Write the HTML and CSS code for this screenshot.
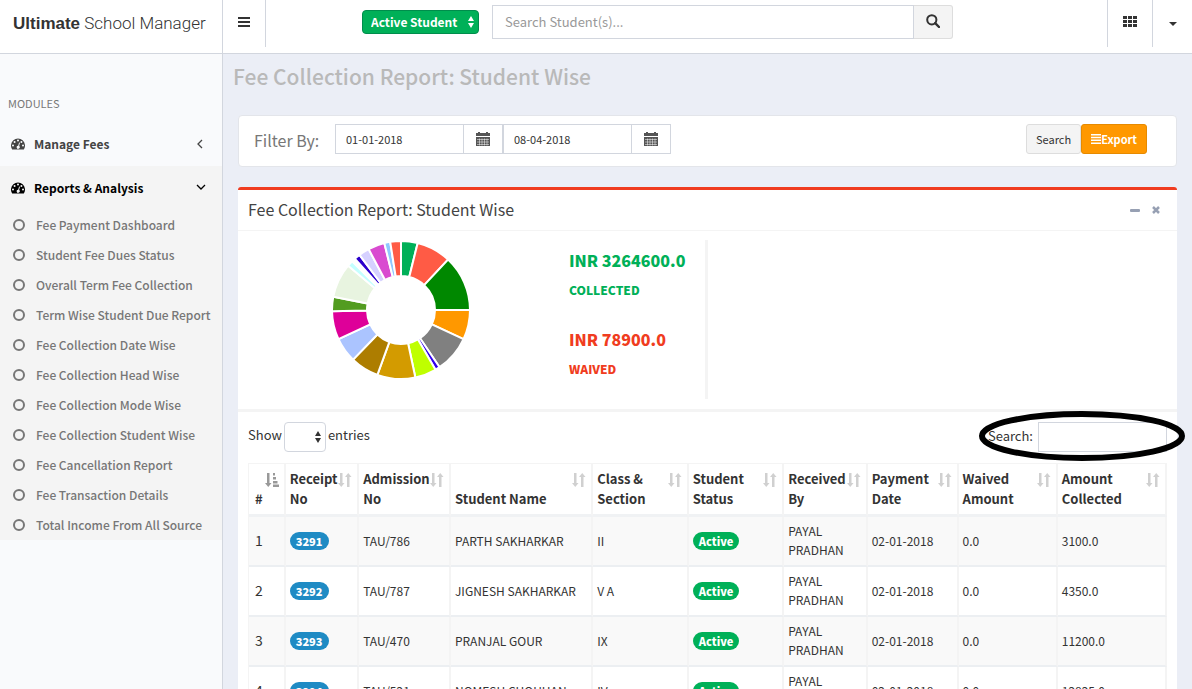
FILE: index.html
```html
<!DOCTYPE html>
<html lang="en">
<head>
  <meta charset="utf-8">
  <title>Ultimate School Manager</title>
  <link rel="stylesheet" href="styles.css">
</head>
<body>
  <svg class="sprite" aria-hidden="true">
    <symbol id="dash" viewBox="0 0 14 12">
      <path fill-rule="evenodd" d="M1.2 11.5A7 7 0 1 1 12.8 11.5ZM2 6.5a1 1 0 1 0 0 2a1 1 0 0 0 0-2ZM3.6 3a1 1 0 1 0 0 2a1 1 0 0 0 0-2ZM7 1.6a1 1 0 1 0 0 2a1 1 0 0 0 0-2ZM10.4 3a1 1 0 1 0 0 2a1 1 0 0 0 0-2ZM12 6.5a1 1 0 1 0 0 2a1 1 0 0 0 0-2ZM8.1 4.5L7.2 7.8a1.5 1.5 0 1 0 .9.3L9 4.8Z"/>
    </symbol>
    <symbol id="ring" viewBox="0 0 12 12">
      <circle cx="6" cy="6" r="5" fill="none" stroke="currentColor" stroke-width="2"/>
    </symbol>
    <symbol id="updown" viewBox="0 0 8 12">
      <path d="M4 0L7 5H1ZM4 12L1 7H7Z"/>
    </symbol>
    <symbol id="calendar" viewBox="0 0 14 14">
      <path d="M0 1h2V0h2v1h6V0h2v1h2v3H0ZM0 5h14v9H0Z"/>
      <path d="M1 7.500h12M1 10h12M1 12.500h12M3.500 6.500v7M6 6.500v7M8.500 6.500v7M11 6.500v7" stroke="#fff" stroke-width=".5"/>
    </symbol>
    <symbol id="sort" viewBox="0 0 14 14">
      <path d="M2 0h2.500v10H6.500L3.250 14L0 10H2ZM9 14h2.500V4H13.500L10.250 0L7 4H9Z"/>
    </symbol>
    <symbol id="sort-asc" viewBox="0 0 14 14">
      <path d="M2 0h2.500v10H6.500L3.250 14L0 10H2ZM8 0h2v2.500H8ZM8 4h3v2.500H8ZM8 8h4.500v2.500H8ZM8 11.500h6V14H8Z"/>
    </symbol>
  </svg>

  <div class="wrapper">
    <header class="main-header">
      <a class="logo" href="#"><b>Ultimate</b> School Manager</a>
      <button class="nav-item toggle" type="button" aria-label="Toggle navigation">
        <svg width="12" height="10" viewBox="0 0 12 10"><path d="M0 0h12v2H0ZM0 4h12v2H0ZM0 8h12v2H0Z"/></svg>
      </button>
      <form class="navbar-form">
        <span class="select-wrap status">
          <select aria-label="Student status"><option>Active Student</option></select>
          <svg width="8" height="12"><use href="#updown"/></svg>
        </span>
        <input class="navbar-search" type="text" placeholder="Search Student(s)..." aria-label="Search students">
        <button class="search-btn" type="button" aria-label="Search">
          <svg width="14" height="14" viewBox="0 0 14 14"><circle cx="5.800" cy="5.800" r="4.600" fill="none" stroke="currentColor" stroke-width="2"/><path d="M9.200 9.200L13 13" stroke="currentColor" stroke-width="2.400" stroke-linecap="round"/></svg>
        </button>
      </form>
      <div class="nav-right">
        <button class="nav-item" type="button" aria-label="Apps">
          <svg width="14" height="11" viewBox="0 0 14 11"><path d="M0 0h4v3H0ZM5 0h4v3H5ZM10 0h4v3h-4ZM0 4h4v3H0ZM5 4h4v3H5ZM10 4h4v3h-4ZM0 8h4v3H0ZM5 8h4v3H5ZM10 8h4v3h-4Z"/></svg>
        </button>
        <button class="nav-item account" type="button" aria-label="Account">
          <svg width="8" height="4" viewBox="0 0 8 4"><path d="M0 0h8L4 4Z"/></svg>
        </button>
      </div>
    </header>

    <div class="page">
      <nav class="sidebar">
        <div class="sidebar-header">MODULES</div>
        <a class="module" href="#">
          <svg width="14" height="12"><use href="#dash"/></svg><span>Manage Fees</span>
          <svg class="angle" width="10" height="10" viewBox="0 0 10 10"><path d="M6 1L2 5L6 9"/></svg>
        </a>
        <a class="module active" href="#">
          <svg width="14" height="12"><use href="#dash"/></svg><span>Reports &amp; Analysis</span>
          <svg class="angle" width="10" height="10" viewBox="0 0 10 10"><path d="M1 2L5 6L9 2"/></svg>
        </a>
        <ul class="submenu">
          <li><a href="#"><svg width="12" height="12"><use href="#ring"/></svg>Fee Payment Dashboard</a></li>
          <li><a href="#"><svg width="12" height="12"><use href="#ring"/></svg>Student Fee Dues Status</a></li>
          <li><a href="#"><svg width="12" height="12"><use href="#ring"/></svg>Overall Term Fee Collection</a></li>
          <li><a href="#"><svg width="12" height="12"><use href="#ring"/></svg>Term Wise Student Due Report</a></li>
          <li><a href="#"><svg width="12" height="12"><use href="#ring"/></svg>Fee Collection Date Wise</a></li>
          <li><a href="#"><svg width="12" height="12"><use href="#ring"/></svg>Fee Collection Head Wise</a></li>
          <li><a href="#"><svg width="12" height="12"><use href="#ring"/></svg>Fee Collection Mode Wise</a></li>
          <li><a href="#"><svg width="12" height="12"><use href="#ring"/></svg>Fee Collection Student Wise</a></li>
          <li><a href="#"><svg width="12" height="12"><use href="#ring"/></svg>Fee Cancellation Report</a></li>
          <li><a href="#"><svg width="12" height="12"><use href="#ring"/></svg>Fee Transaction Details</a></li>
          <li><a href="#"><svg width="12" height="12"><use href="#ring"/></svg>Total Income From All Source</a></li>
        </ul>
      </nav>

      <main class="content">
        <h1>Fee Collection Report: Student Wise</h1>

        <form class="filter">
          <span class="filter-label">Filter By:</span>
          <div class="date-group">
            <input type="text" value="01-01-2018" aria-label="From date">
            <span class="addon"><svg width="14" height="14"><use href="#calendar"/></svg></span>
            <input type="text" value="08-04-2018" aria-label="To date">
            <span class="addon"><svg width="14" height="14"><use href="#calendar"/></svg></span>
          </div>
          <div class="filter-buttons">
            <button class="btn" type="button">Search</button>
            <button class="btn btn-export" type="button"><svg width="10" height="10" viewBox="0 0 10 10"><path d="M0 0h10v1.500H0ZM0 2.800h10v1.500H0ZM0 5.600h10v1.500H0ZM0 8.400h10v1.500H0Z"/></svg>Export</button>
          </div>
        </form>

        <section class="box">
          <div class="box-header">
            <h2>Fee Collection Report: Student Wise</h2>
            <button type="button" aria-label="Collapse"><svg width="10" height="3" viewBox="0 0 10 3"><rect width="10" height="3" rx="1"/></svg></button>
            <button type="button" aria-label="Close"><svg width="8" height="8" viewBox="0 0 8 8"><path d="M1 1L7 7M7 1L1 7" stroke="currentColor" stroke-width="2.500"/></svg></button>
          </div>

          <div class="summary">
            <div class="summary-inner">
              <svg id="donut" width="140" height="140" viewBox="-70 -70 140 140" role="img" aria-label="Fee collection by student"></svg>
              <dl class="totals">
                <div class="collected"><dd>INR 3264600.0</dd><dt>COLLECTED</dt></div>
                <div class="waived"><dd>INR 78900.0</dd><dt>WAIVED</dt></div>
              </dl>
            </div>
          </div>

          <div class="table-area">
            <div class="table-tools">
              <label class="length">Show
                <span class="select-wrap">
                  <select><option></option><option>10</option><option>25</option></select>
                  <svg width="8" height="12"><use href="#updown"/></svg>
                </span>
                entries</label>
              <div class="table-search">
                <label for="table-search">Search:</label>
                <input id="table-search" type="text">
                <svg class="marker" width="208" height="52" viewBox="0 0 208 52"><ellipse cx="104" cy="26" rx="100" ry="22"/></svg>
              </div>
            </div>

            <table>
              <colgroup>
                <col class="c-num"><col class="c-receipt"><col class="c-adm"><col class="c-name"><col class="c-class"><col class="c-status"><col class="c-by"><col class="c-date"><col class="c-waived"><col class="c-amount">
              </colgroup>
              <thead>
                <tr>
                  <th>#<svg class="sorted" width="14" height="14"><use href="#sort-asc"/></svg></th>
                  <th>Receipt<br>No<svg width="14" height="14"><use href="#sort"/></svg></th>
                  <th>Admission<br>No<svg width="14" height="14"><use href="#sort"/></svg></th>
                  <th>Student Name<svg width="14" height="14"><use href="#sort"/></svg></th>
                  <th>Class &amp;<br>Section<svg width="14" height="14"><use href="#sort"/></svg></th>
                  <th>Student<br>Status<svg width="14" height="14"><use href="#sort"/></svg></th>
                  <th>Received<br>By<svg width="14" height="14"><use href="#sort"/></svg></th>
                  <th>Payment<br>Date<svg width="14" height="14"><use href="#sort"/></svg></th>
                  <th>Waived<br>Amount<svg width="14" height="14"><use href="#sort"/></svg></th>
                  <th>Amount<br>Collected<svg width="14" height="14"><use href="#sort"/></svg></th>
                </tr>
              </thead>
              <tbody>
                <tr><td class="num">1</td><td><span class="badge">3291</span></td><td>TAU/786</td><td>PARTH SAKHARKAR</td><td>II</td><td><span class="badge green">Active</span></td><td>PAYAL PRADHAN</td><td>02-01-2018</td><td>0.0</td><td>3100.0</td></tr>
                <tr><td class="num">2</td><td><span class="badge">3292</span></td><td>TAU/787</td><td>JIGNESH SAKHARKAR</td><td>V A</td><td><span class="badge green">Active</span></td><td>PAYAL PRADHAN</td><td>02-01-2018</td><td>0.0</td><td>4350.0</td></tr>
                <tr><td class="num">3</td><td><span class="badge">3293</span></td><td>TAU/470</td><td>PRANJAL GOUR</td><td>IX</td><td><span class="badge green">Active</span></td><td>PAYAL PRADHAN</td><td>02-01-2018</td><td>0.0</td><td>11200.0</td></tr>
                <tr><td class="num">4</td><td><span class="badge">3294</span></td><td>TAU/521</td><td>NOMESH CHOUHAN</td><td>IV</td><td><span class="badge green">Active</span></td><td>PAYAL PRADHAN</td><td>02-01-2018</td><td>0.0</td><td>12825.0</td></tr>
              </tbody>
            </table>
          </div>
        </section>
      </main>
    </div>
  </div>

  <script>
    // [end angle, colour], clockwise from 12 o'clock
    var slices = [
      [14, '#00b058'], [43, '#ff5b45'], [90, '#008800'], [115, '#ff9800'],
      [146, '#808080'], [150, '#3300ee'], [168, '#bfff00'], [200, '#d39b00'],
      [224, '#ad7d00'], [245, '#abc4ff'], [269, '#de0099'], [281, '#529c20'],
      [310, '#e8f4e0'], [315, '#c4ffff'], [318, '#ffffff'], [323, '#2a00cc'],
      [332, '#d6d1ff'], [346, '#d94bd0'], [351, '#90c8ff'], [360, '#ff5b45']
    ];
    var outer = 69, inner = 34, start = 0;

    function point(r, deg) {
      var a = deg * Math.PI / 180;
      return (r * Math.sin(a)).toFixed(2) + ' ' + (-r * Math.cos(a)).toFixed(2);
    }

    slices.forEach(function (s) {
      var path = document.createElementNS('http://www.w3.org/2000/svg', 'path');
      path.setAttribute('d', 'M' + point(outer, start) +
        'A' + outer + ' ' + outer + ' 0 0 1 ' + point(outer, s[0]) +
        'L' + point(inner, s[0]) +
        'A' + inner + ' ' + inner + ' 0 0 0 ' + point(inner, start) + 'Z');
      path.setAttribute('fill', s[1]);
      document.getElementById('donut').appendChild(path);
      start = s[0];
    });
  </script>
</body>
</html>
```

FILE: styles.css
```css
* {
  box-sizing: border-box;
}
body {
  margin: 0;
  font-family: "Noto Sans CJK SC", "Open Sans", sans-serif;
  font-size: 13px;
  line-height: 20px;
  color: #333;
  background: #ebeef6;
}
button, input, select {
  font: inherit;
  color: inherit;
  margin: 0;
}
button {
  cursor: pointer;
}
svg {
  display: block;
  flex: none;
  fill: currentColor;
}
a {
  color: inherit;
  text-decoration: none;
}
.sprite {
  position: absolute;
  width: 0;
  height: 0;
}
.wrapper {
  height: 100vh;
  overflow: hidden;
  display: flex;
  flex-direction: column;
}

/* header */
.main-header {
  display: flex;
  flex: none;
  height: 54px;
  background: #fff;
  border-bottom: 1px solid #d2d6de;
}
.logo {
  width: 223px;
  padding: 13px;
  border-right: 1px solid #d2d6de;
  font-family: Roboto, "Liberation Sans", sans-serif;
  font-size: 17px;
  font-weight: 300;
  white-space: nowrap;
}
.logo b {
  font-family: "Liberation Sans", sans-serif;
  font-weight: 700;
}
.nav-item {
  display: flex;
  align-items: center;
  justify-content: center;
  width: 45px;
  height: 47px;
  padding: 0 0 4px;
  border: 0;
  border-left: 1px solid #d2d6de;
  background: none;
}
.toggle {
  width: 43px;
  border-left: 0;
  border-right: 1px solid #d2d6de;
}
.account {
  width: 40px;
  padding: 0;
}
.navbar-form {
  display: flex;
  flex: 0 1 591px;
  height: 34px;
  margin: 5px 0 0 96px;
}
.navbar-search {
  flex: 1;
  min-width: 0;
  margin-left: 13px;
  padding: 0 12px;
  border: 1px solid #d2d6de;
}
.navbar-search::placeholder {
  color: #999;
}
.search-btn {
  width: 39px;
  padding: 0 0 2px 12px;
  border: 1px solid #ddd;
  border-left: 0;
  border-radius: 0 3px 3px 0;
  background: #f4f4f4;
}
.nav-right {
  display: flex;
  margin-left: auto;
}
.select-wrap {
  position: relative;
  display: inline-block;
}
.select-wrap select {
  appearance: none;
  width: 42px;
  height: 30px;
  border: 1px solid #d2d6de;
  border-radius: 4px;
  background: #fff;
}
.select-wrap svg {
  position: absolute;
  right: 4px;
  top: 50%;
  margin-top: -6px;
  pointer-events: none;
}
.status {
  height: 24px;
  margin-top: 5px;
  color: #fff;
}
.status select {
  width: 117px;
  height: 24px;
  padding: 0 8px;
  border-color: #008d4c;
  background: #00b058;
  font-size: 12px;
  font-weight: 700;
  line-height: 20px;
}

/* sidebar */
.page {
  display: flex;
  flex: 1;
}
.sidebar {
  flex: none;
  width: 223px;
  border-right: 1px solid #d2d6de;
  background: #f9fafc;
  font-size: 12px;
}
.sidebar-header {
  padding: 39px 8px 9px;
  font-size: 11px;
  color: #777;
}
.module {
  display: flex;
  align-items: center;
  height: 44px;
  padding: 0 16px 0 11px;
  color: #444;
  font-weight: 700;
}
.module span {
  flex: 1;
  padding-left: 9px;
}
.module.active {
  background: #f4f4f4;
  color: #000;
}
.angle path {
  fill: none;
  stroke: currentColor;
  stroke-width: 1.300;
}
.submenu {
  margin: 0;
  padding: 0;
  list-style: none;
  background: #f4f4f4;
  color: #777;
  font-weight: 500;
}
.submenu a {
  display: flex;
  align-items: center;
  gap: 11px;
  height: 30px;
  padding-left: 13px;
  white-space: nowrap;
}

/* content */
.content {
  flex: 1;
  min-width: 0;
  padding: 7px 15px 0;
}
h1 {
  margin: 0 0 24px -5px;
  font-size: 21px;
  font-weight: 500;
  line-height: 30px;
  color: #b9b9b9;
}
.filter {
  display: flex;
  height: 52px;
  margin-bottom: 20px;
  padding: 8px 29px 0 15px;
  border: 1px solid #e3e5ea;
  border-radius: 4px;
  background: #fff;
}
.filter-label {
  width: 81px;
  font-size: 16px;
  line-height: 32px;
  color: #777;
}
.date-group {
  display: flex;
  height: 30px;
  font-size: 11px;
}
.date-group input {
  width: 129px;
  padding: 0 10px;
  border: 1px solid #d2d6de;
}
.addon {
  display: flex;
  align-items: center;
  justify-content: center;
  width: 39px;
  border: 1px solid #d2d6de;
  border-left: 0;
  color: #555;
}
.filter-buttons {
  display: flex;
  height: 30px;
  margin-left: auto;
  font-size: 11px;
}
.btn {
  display: flex;
  align-items: center;
  padding: 0 9px;
  border: 1px solid #ddd;
  border-radius: 3px;
  background: #f4f4f4;
}
.btn-export {
  border-color: #e68a00;
  background: #ff9800;
  color: #fff;
  font-weight: 700;
}
.box {
  border-top: 3px solid #f03c20;
  border-radius: 3px;
  background: #fff;
}
.box-header {
  display: flex;
  align-items: center;
  gap: 12px;
  height: 41px;
  padding: 0 17px 0 10px;
  border-bottom: 1px solid #f4f4f4;
}
h2 {
  flex: 1;
  margin: 0;
  padding-bottom: 3px;
  font-size: 16px;
  font-weight: 400;
  color: #444;
}
.box-header button {
  padding: 0;
  border: 0;
  background: none;
  color: #97a0b3;
}
.summary {
  padding: 9px 0 10px;
  border-bottom: 3px solid #f4f4f4;
}
.summary-inner {
  display: flex;
  width: 50%;
  height: 159px;
  border-right: 3px solid #f4f4f4;
}
#donut {
  margin-left: 93px;
  stroke: #fff;
  stroke-width: 2;
}
.totals {
  margin: 10px 0 0 98px;
  font-weight: 900;
}
.totals dt {
  margin-bottom: 29px;
  font-size: 12px;
}
.totals dd {
  margin: 0 0 10px;
  font-size: 16px;
}
.collected {
  color: #00b058;
}
.waived {
  color: #f03c20;
}

/* table */
.table-area {
  padding: 10px;
}
.table-tools {
  display: flex;
  justify-content: space-between;
  height: 30px;
  margin-bottom: 11px;
}
.length {
  display: flex;
  gap: 2px;
  line-height: 26px;
}
.table-search {
  position: relative;
  display: flex;
  gap: 5px;
  line-height: 28px;
}
.table-search input {
  width: 129px;
  border: 1px solid #d2d6de;
}
.marker {
  position: absolute;
  right: -19px;
  top: -12px;
  fill: none;
  stroke: #000;
  stroke-width: 6;
  pointer-events: none;
}
table {
  width: 100%;
  table-layout: fixed;
  border-spacing: 0;
  border-top: 1px solid #f4f4f4;
  border-left: 1px solid #f4f4f4;
}
.c-num { width: 4%; }
.c-receipt { width: 8%; }
.c-adm { width: 10%; }
.c-name { width: 15.500%; }
.c-class { width: 10.400%; }
.c-status { width: 10.400%; }
.c-by { width: 9.100%; }
.c-date { width: 9.900%; }
.c-waived { width: 10.800%; }
th, td {
  border-right: 2px solid #f4f4f4;
  text-align: left;
}
th {
  position: relative;
  height: 53px;
  padding: 5px 4px;
  border-bottom: 3px solid #f0f2f4;
  vertical-align: bottom;
  white-space: nowrap;
}
th svg {
  position: absolute;
  top: 9px;
  right: 5px;
  color: #d0d0d0;
}
th .sorted {
  color: #999;
}
td {
  height: 50px;
  padding: 3px 4px 5px;
  border-bottom: 2px solid #eceff2;
  font-size: 12px;
  line-height: 19px;
}
th:first-child, td:first-child {
  padding-left: 6px;
}
.num {
  font-size: 14px;
}
tbody tr:nth-child(odd) {
  background: #f9f9f9;
}
.badge {
  display: inline-block;
  height: 18px;
  padding: 0 6px;
  border-radius: 9px;
  background: #1f8bc4;
  color: #fff;
  font-size: 11px;
  font-weight: 900;
  line-height: 18px;
  vertical-align: middle;
}
.badge.green {
  background: #00b058;
}
```
